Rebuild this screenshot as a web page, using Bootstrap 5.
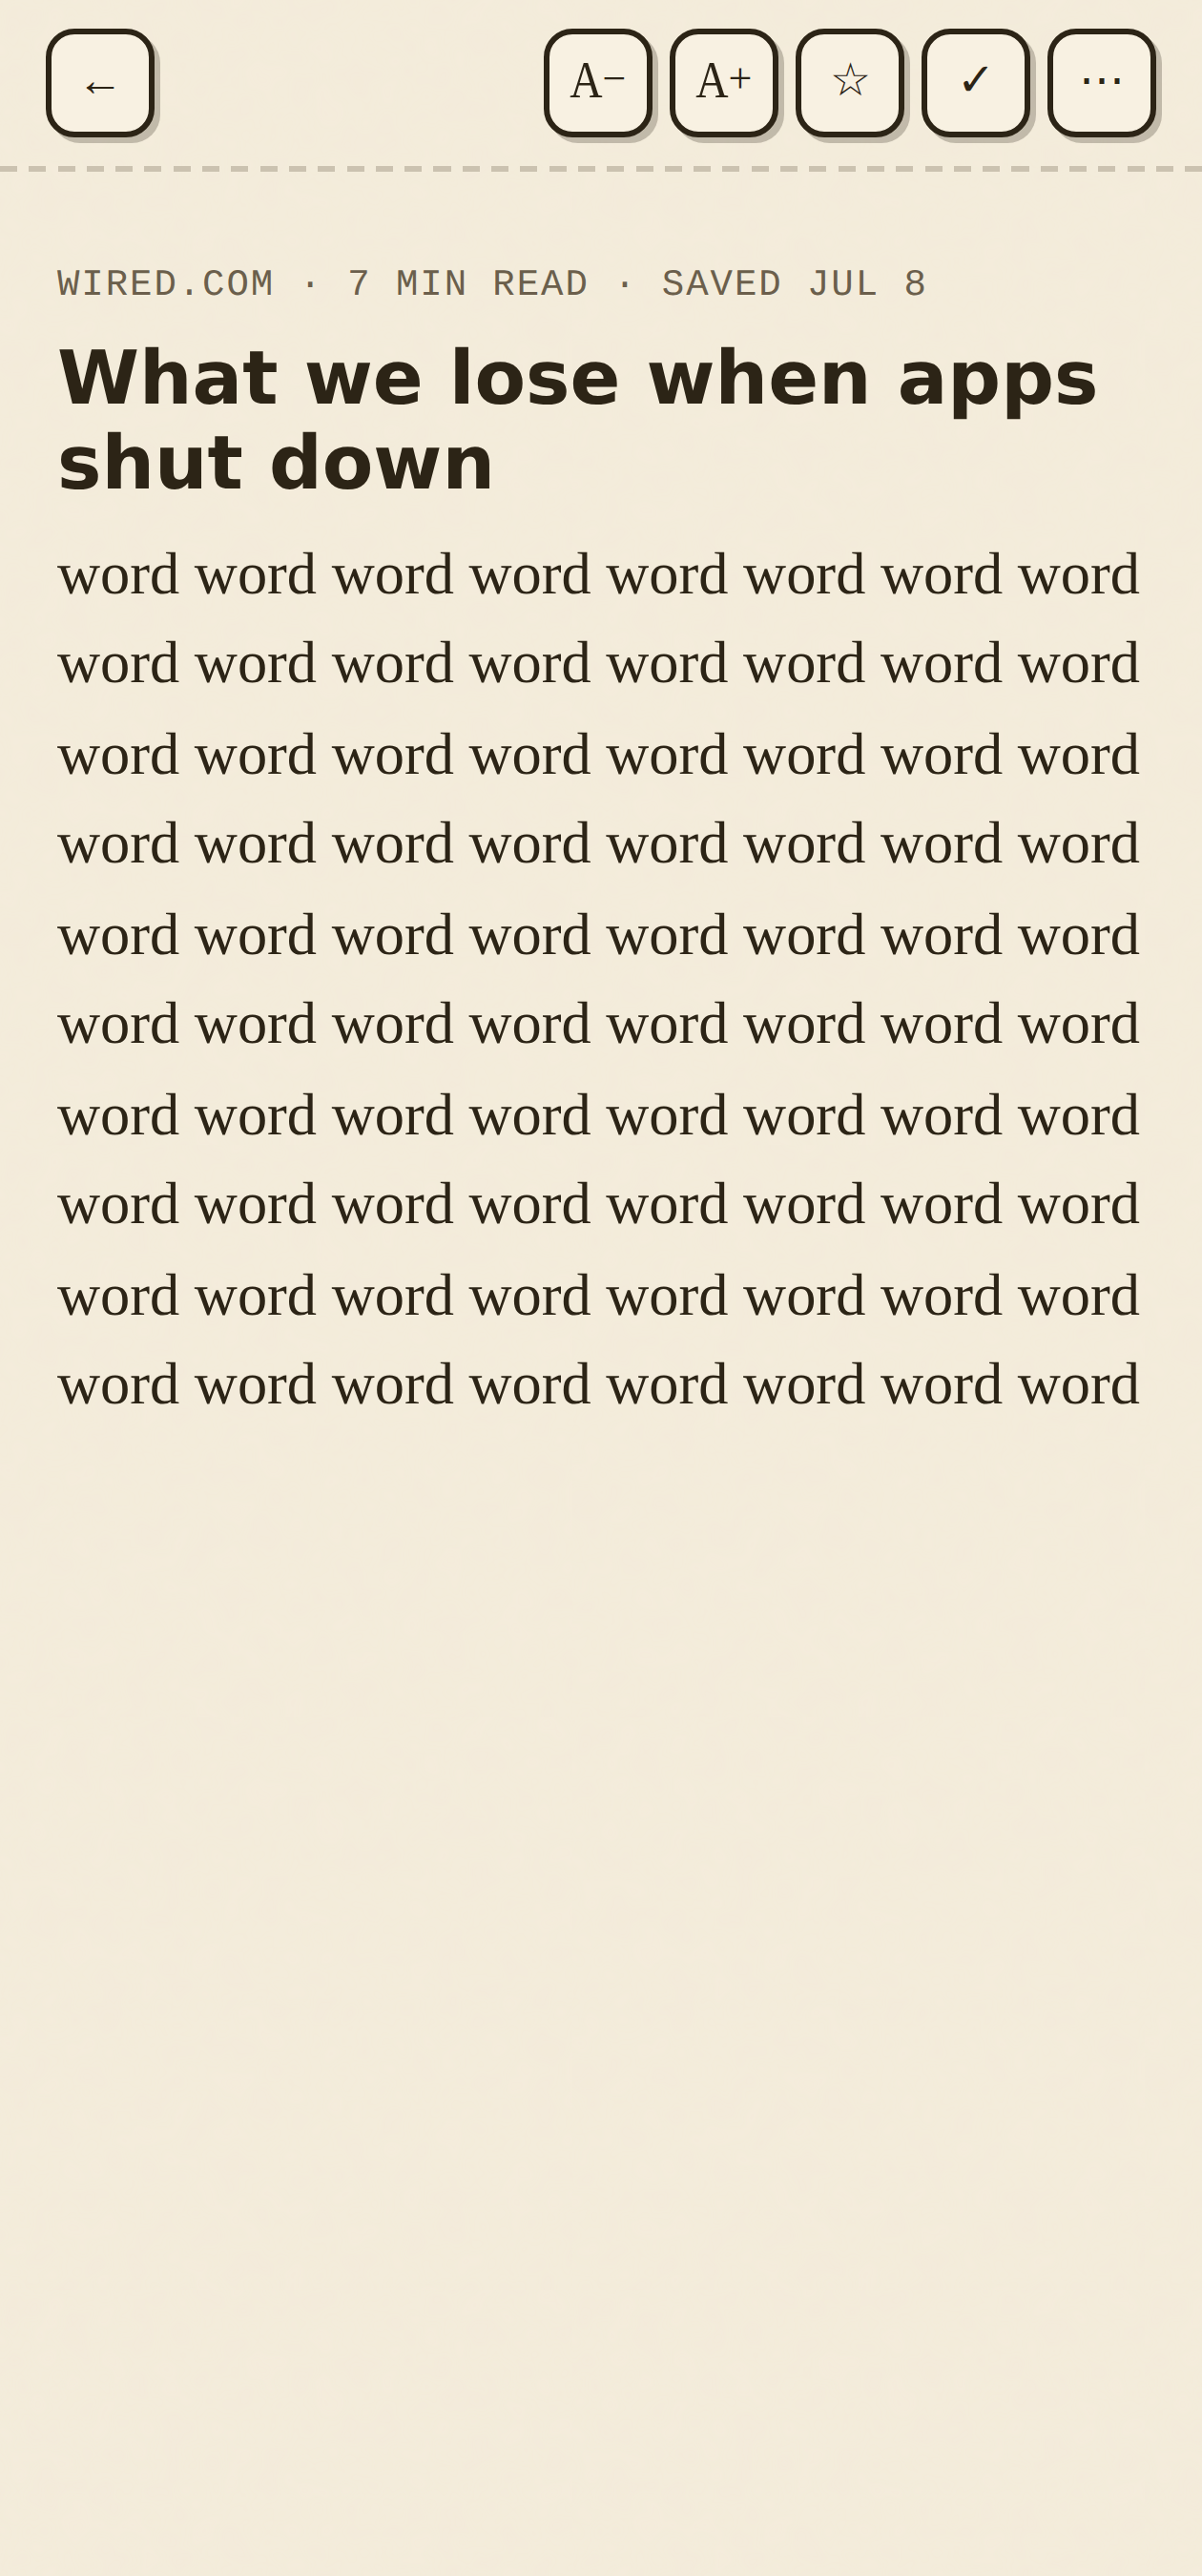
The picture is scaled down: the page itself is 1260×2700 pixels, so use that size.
<!doctype html>
<html lang="en"><head><meta charset="utf-8"><title>Reader</title>
<link href="https://cdn.jsdelivr.net/npm/bootstrap@5.3.0/dist/css/bootstrap.min.css" rel="stylesheet">
<style>
html,body{background-color:#f3ebda;color:#2c2416;min-height:2700px;text-rendering:geometricPrecision}
body{background-image:url("data:image/svg+xml,%3Csvg xmlns='http://www.w3.org/2000/svg' width='600' height='600'%3E%3Cfilter id='n'%3E%3CfeTurbulence type='fractalNoise' baseFrequency='.03' numOctaves='2' stitchTiles='stitch'/%3E%3CfeColorMatrix values='0 0 0 0 1 0 0 0 0 .96 0 0 0 0 .86 0 0 0 .5 0'/%3E%3C/filter%3E%3Crect width='600' height='600' filter='url(%23n)' opacity='.12'/%3E%3C/svg%3E")}
.tool-row{padding:30px 48px 36px;background:repeating-linear-gradient(90deg,#cbc2b0 0 18px,transparent 18px 30.3px) left bottom/100% 6px no-repeat}
.tool-group{gap:18px}
.tool-btn{width:114px;height:114px;padding:0 0 6px;border:6px solid #2c2416;border-radius:30px;background:#f8f1e2;color:#2c2416;box-shadow:6px 6px 0 rgba(44,36,22,.25);font-family:"Liberation Serif",serif;font-size:48px;line-height:1;display:flex;align-items:center;justify-content:center}
.tool-btn:hover{background:#f8f1e2;color:#2c2416;border-color:#2c2416}
.glyph-a{display:inline-block;font-size:54px;transform:scaleX(.88);margin:0 -2px 0 -3px}
.glyph-sign{display:inline-block;font-size:44px;transform:translateY(-1px)}
.article-body{padding:91px 60px}
.meta-line{font-family:"Liberation Mono",monospace;font-size:39px;letter-spacing:1.95px;color:#6b5f4c;margin-bottom:24.5px;line-height:57px}
.head-line{font-family:"DejaVu Sans",sans-serif;font-weight:700;font-size:78px;line-height:89.7px;color:#2c2416;margin-bottom:23px}
.body-copy{font-family:"Liberation Serif",serif;font-size:62.4px;line-height:93px;color:#2c2416;margin:0}
.copy-line{display:block;white-space:nowrap}
.copy-line:nth-child(even){padding-bottom:3px}
</style></head><body>
<div class="tool-row d-flex justify-content-between">
<button class="btn tool-btn">←</button>
<div class="d-flex tool-group">
<button class="btn tool-btn"><span class="glyph-a">A</span><span class="glyph-sign">−</span></button><button class="btn tool-btn"><span class="glyph-a">A</span><span class="glyph-sign">+</span></button><button class="btn tool-btn">☆</button><button class="btn tool-btn">✓</button><button class="btn tool-btn">⋯</button>
</div></div>
<main class="article-body">
<div class="meta-line">WIRED.COM · 7 MIN READ · SAVED JUL 8</div>
<h1 class="head-line">What we lose when apps shut down</h1>
<p class="body-copy">
<span class="copy-line">word word word word word word word word</span>
<span class="copy-line">word word word word word word word word</span>
<span class="copy-line">word word word word word word word word</span>
<span class="copy-line">word word word word word word word word</span>
<span class="copy-line">word word word word word word word word</span>
<span class="copy-line">word word word word word word word word</span>
<span class="copy-line">word word word word word word word word</span>
<span class="copy-line">word word word word word word word word</span>
<span class="copy-line">word word word word word word word word</span>
<span class="copy-line">word word word word word word word word</span>
</p>
</main>
<script src="https://cdn.jsdelivr.net/npm/bootstrap@5.3.0/dist/js/bootstrap.bundle.min.js"></script>
</body></html>
